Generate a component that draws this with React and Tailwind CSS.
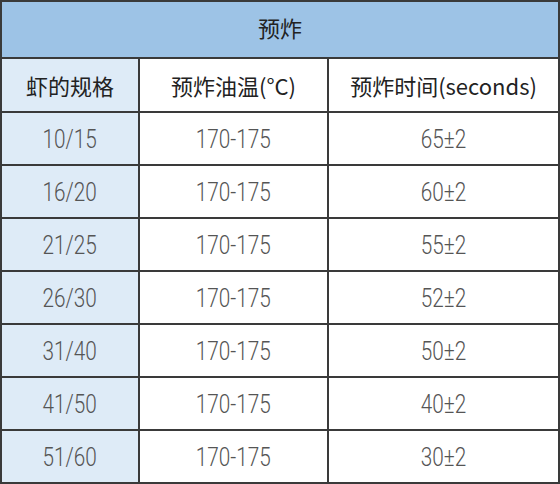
const rows = [
  ["10/15", "170-175", "65±2"],
  ["16/20", "170-175", "60±2"],
  ["21/25", "170-175", "55±2"],
  ["26/30", "170-175", "52±2"],
  ["31/40", "170-175", "50±2"],
  ["41/50", "170-175", "40±2"],
  ["51/60", "170-175", "30±2"],
];

function Num({ children }) {
  return (
    <span
      className="inline-block scale-x-[0.83] text-[25px] font-light text-[#555] leading-none translate-y-[1px]"
      style={{ fontFamily: 'Roboto, "Noto Sans", sans-serif' }}
    >
      {children}
    </span>
  );
}

export default function App() {
  return (
    <div
      className="w-[560px] h-[484px] bg-white"
      style={{ fontFamily: '"Noto Sans CJK SC", "Noto Sans", sans-serif' }}
    >
      <table className="w-[560px] border-collapse border-2 border-[#3a3a3a] table-fixed">
        <colgroup>
          <col className="w-[138px]" />
          <col className="w-[189px]" />
          <col />
        </colgroup>
        <thead>
          <tr className="h-[57px] bg-[#9dc3e6]">
            <th colSpan={3} className="border-b-2 border-[#3a3a3a] text-[22px] font-normal text-[#222] pb-1">
              预炸
            </th>
          </tr>
          <tr className="h-[54px]">
            <th className="bg-[#deebf7] border-2 border-[#3a3a3a] text-[22px] font-normal text-[#222]">虾的规格</th>
            <th className="border-2 border-[#3a3a3a] text-[22px] font-normal text-[#222]">预炸油温(°C)</th>
            <th className="border-2 border-[#3a3a3a] text-[22px] font-normal text-[#222]">预炸时间(seconds)</th>
          </tr>
        </thead>
        <tbody>
          {rows.map((r) => (
            <tr key={r[0]} className="h-[53px]">
              <td className="bg-[#deebf7] border-2 border-[#3a3a3a] text-center"><Num>{r[0]}</Num></td>
              <td className="border-2 border-[#3a3a3a] text-center"><Num>{r[1]}</Num></td>
              <td className="border-2 border-[#3a3a3a] text-center"><Num>{r[2]}</Num></td>
            </tr>
          ))}
        </tbody>
      </table>
    </div>
  );
}
